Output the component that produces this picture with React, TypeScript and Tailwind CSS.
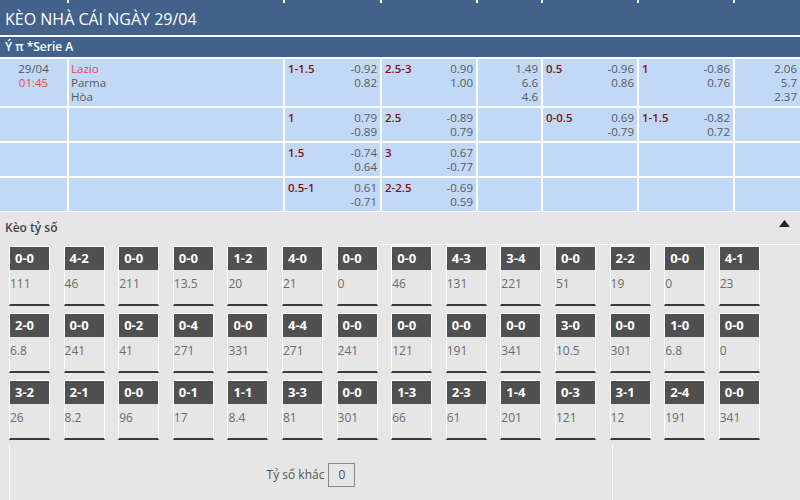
import React from 'react';

type OddsCell = { label?: string; odds?: string[] };

const rows: { date?: string; time?: string; teams?: string[]; cells: OddsCell[] }[] = [
  {
    date: '29/04',
    time: '01:45',
    teams: ['Lazio', 'Parma', 'Hòa'],
    cells: [
      { label: '1-1.5', odds: ['-0.92', '0.82'] },
      { label: '2.5-3', odds: ['0.90', '1.00'] },
      { odds: ['1.49', '6.6', '4.6'] },
      { label: '0.5', odds: ['-0.96', '0.86'] },
      { label: '1', odds: ['-0.86', '0.76'] },
      { odds: ['2.06', '5.7', '2.37'] },
    ],
  },
  {
    cells: [
      { label: '1', odds: ['0.79', '-0.89'] },
      { label: '2.5', odds: ['-0.89', '0.79'] },
      {},
      { label: '0-0.5', odds: ['0.69', '-0.79'] },
      { label: '1-1.5', odds: ['-0.82', '0.72'] },
      {},
    ],
  },
  {
    cells: [
      { label: '1.5', odds: ['-0.74', '0.64'] },
      { label: '3', odds: ['0.67', '-0.77'] },
      {}, {}, {}, {},
    ],
  },
  {
    cells: [
      { label: '0.5-1', odds: ['0.61', '-0.71'] },
      { label: '2-2.5', odds: ['-0.69', '0.59'] },
      {}, {}, {}, {},
    ],
  },
];

const scores: [string, string][][] = [
  [['0-0', '111'], ['4-2', '46'], ['0-0', '211'], ['0-0', '13.5'], ['1-2', '20'], ['4-0', '21'], ['0-0', '0'], ['0-0', '46'], ['4-3', '131'], ['3-4', '221'], ['0-0', '51'], ['2-2', '19'], ['0-0', '0'], ['4-1', '23']],
  [['2-0', '6.8'], ['0-0', '241'], ['0-2', '41'], ['0-4', '271'], ['0-0', '331'], ['4-4', '271'], ['0-0', '241'], ['0-0', '121'], ['0-0', '191'], ['0-0', '341'], ['3-0', '10.5'], ['0-0', '301'], ['1-0', '6.8'], ['0-0', '0']],
  [['3-2', '26'], ['2-1', '8.2'], ['0-0', '96'], ['0-1', '17'], ['1-1', '8.4'], ['3-3', '81'], ['0-0', '301'], ['1-3', '66'], ['2-3', '61'], ['1-4', '201'], ['0-3', '121'], ['3-1', '12'], ['2-4', '191'], ['0-0', '341']],
];

const cols = 'grid grid-cols-[67px_214px_95px_94px_63px_94px_94px_1fr] gap-x-[2px]';

function Odds({ cell }: { cell: OddsCell }) {
  return (
    <div className="bg-[#c1d8f7] flex justify-between pl-[3px] pr-[3px] pt-[3px] pb-[2px]">
      <span className="font-semibold text-[#8e0b0b]">{cell.label}</span>
      <div className="text-right text-[#5a5a5a]">
        {cell.odds?.map((o, i) => <div key={i}>{o}</div>)}
      </div>
    </div>
  );
}

function ScoreBox({ score, value }: { score: string; value: string }) {
  return (
    <div className="w-[41px] h-[60px] flex flex-col border-x border-t border-white border-b-2 border-b-[#3a3a3a]">
      <div className="h-[23px] bg-[#505050] text-white font-bold text-[13px] leading-[23px] pl-[5px]">{score}</div>
      <div className="text-[#6b6b6b] text-[12px] pt-[7px] leading-[14px]">{value}</div>
    </div>
  );
}

export default function App() {
  return (
    <div className="w-[800px] h-[500px] overflow-hidden bg-[#e6e6e6] text-[11.5px] leading-[14px]" style={{ fontFamily: '"Open Sans", "Noto Sans", sans-serif' }}>
      <div className={`${cols} bg-white h-[3px]`}>
        {Array.from({ length: 8 }).map((_, i) => <div key={i} className="bg-[#43628b]" />)}
      </div>
      <div className="bg-[#43628b] h-[32px] flex items-center pl-[5px] text-white text-[16px] leading-none">
        KÈO NHÀ CÁI NGÀY 29/04
      </div>
      <div className="h-[2px] bg-white" />
      <div className="bg-[#43628b] h-[20px] flex items-center pl-[5px] text-white font-semibold text-[12px]">
        Ý π *Serie A
      </div>
      <div className="bg-white flex flex-col gap-y-[2px] pt-[2px] pb-[1px]">
        {rows.map((r, ri) => (
          <div key={ri} className={cols}>
            <div className="bg-[#c1d8f7] text-center pt-[3px]">
              {r.date && <div className="text-[#555]">{r.date}</div>}
              {r.time && <div className="text-[#e8474d]">{r.time}</div>}
            </div>
            <div className="bg-[#c1d8f7] pl-[2px] pt-[3px]">
              {r.teams?.map((t, i) => (
                <div key={i} className={i === 0 ? 'text-[#e8474d]' : 'text-[#5a5a5a]'}>{t}</div>
              ))}
            </div>
            {r.cells.map((c, ci) => <Odds key={ci} cell={c} />)}
          </div>
        ))}
      </div>

      <div className="flex items-center justify-between h-[32px] pl-[5px] pr-[10px]">
        <span className="font-semibold text-[12px] text-[#444]">Kèo tỷ số</span>
        <svg width="11" height="7" viewBox="0 0 11 7" className="-mt-[9px]"><path d="M0 7 L5.5 0 L11 7 Z" fill="#222" /></svg>
      </div>
      <div className="h-px bg-white ml-[380px]" />

      <div className="flex flex-col gap-y-[7px] pl-[9px] pt-px">
        {scores.map((line, li) => (
          <div key={li} className="flex gap-x-[13.6px]">
            {line.map(([s, v], i) => <ScoreBox key={i} score={s} value={v} />)}
          </div>
        ))}
      </div>

      <div className="ml-[9px] mt-[5px] w-[604px] h-[60px] border-x border-white flex items-start justify-center pt-[18px]">
        <span className="text-[#555] text-[12px] mt-[5px] mr-[4px]">Tỷ số khác</span>
        <div className="w-[27px] h-[24px] border border-[#888] flex items-center justify-center text-[12px] text-[#555]">0</div>
      </div>
    </div>
  );
}
